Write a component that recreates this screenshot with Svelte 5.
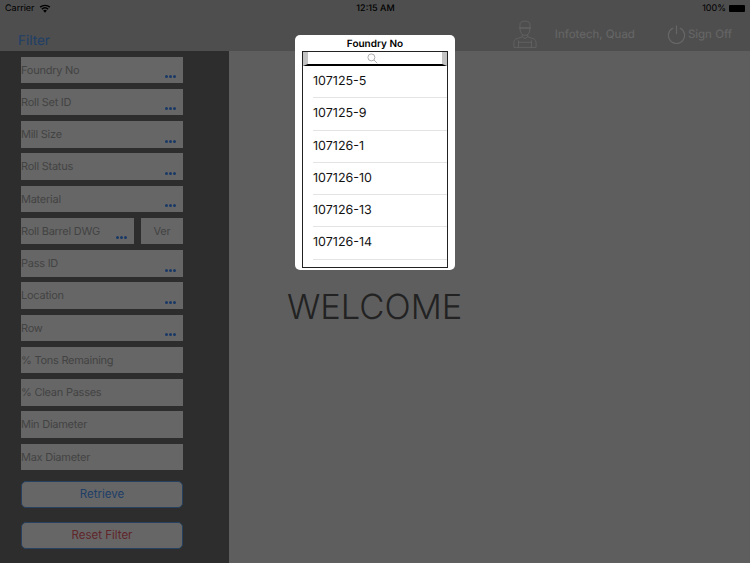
<script>
    const fields = [
        { label: "Foundry No", more: true },
        { label: "Roll Set ID", more: true },
        { label: "Mill Size", more: true },
        { label: "Roll Status", more: true },
        { label: "Material", more: true },
        { label: "Roll Barrel DWG", more: true, ver: true },
        { label: "Pass ID", more: true },
        { label: "Location", more: true },
        { label: "Row", more: true },
        { label: "% Tons Remaining" },
        { label: "% Clean Passes" },
        { label: "Min Diameter" },
        { label: "Max Diameter" },
    ];
    const foundries = ["107125-5", "107125-9", "107126-1", "107126-10", "107126-13", "107126-14"];
</script>

<div class="page">
    <header class="topbar">
        <div class="status">
            <span class="carrier">
                Carrier
                <svg class="wifi" viewBox="0 0 14 10" width="12" height="9" aria-hidden="true">
                    <path d="M7 10 4.800 7.400a3.300 3.300 0 0 1 4.400 0Z" />
                    <path d="M3.900 6.400 2.800 5.100a6.400 6.400 0 0 1 8.400 0L10.100 6.400a4.700 4.700 0 0 0-6.200 0Z" />
                    <path d="M1.900 4.100 .8 2.800a9.500 9.500 0 0 1 12.400 0L12.100 4.100a7.800 7.800 0 0 0-10.200 0Z" />
                </svg>
            </span>
            <span class="clock">12:15 AM</span>
            <span class="battery-wrap">
                100%
                <span class="battery"></span>
            </span>
        </div>
        <div class="nav">
            <span class="filter-title">Filter</span>
            <div class="user">
                <svg class="avatar" viewBox="0 0 26 30" width="24" height="28" fill="none" stroke="currentColor" stroke-width="0.800" aria-hidden="true">
                    <path d="M7.500 8.500V5.500Q7.500 1 13 1T18.500 5.500V8.500Z" />
                    <path d="M6.500 8.500H19.500" />
                    <path d="M7.500 8.500Q7.800 16.500 13 16.500T18.500 8.500" />
                    <path d="M10 15.500V18L13 20 16 18V15.500" />
                    <path d="M10 18 3 20.500Q1 21.500 1 24V29.500H25V24Q25 21.500 23 20.500L16 18" />
                    <path d="M6 22V29.500M20 22V29.500M6 24H20" />
                </svg>
                <span class="user-name">Infotech, Quad</span>
                <svg class="power" viewBox="0 0 20 20" width="19" height="19" fill="none" stroke="currentColor" stroke-width="1.300" stroke-linecap="round" aria-hidden="true">
                    <path d="M6 3.500a8.500 8.500 0 1 0 8 0" />
                    <path d="M10 1V9" />
                </svg>
                <span class="sign-off">Sign Off</span>
            </div>
        </div>
    </header>

    <div class="body">
        <aside class="sidebar">
            {#each fields as f}
                <div class="field-row">
                    <div class="field">
                        <span>{f.label}</span>
                        {#if f.more}
                            <i class="dots"><b></b><b></b><b></b></i>
                        {/if}
                    </div>
                    {#if f.ver}
                        <div class="field ver">Ver</div>
                    {/if}
                </div>
            {/each}
            <button type="button" class="btn retrieve">Retrieve</button>
            <button type="button" class="btn reset">Reset Filter</button>
        </aside>
        <main class="content">
            <h1>WELCOME</h1>
        </main>
    </div>

    <div class="backdrop"></div>

    <div class="popup" role="dialog" aria-label="Foundry No">
        <div class="popup-title">Foundry No</div>
        <div class="table">
            <div class="searchbar">
                <svg viewBox="0 0 12 12" width="11" height="11" fill="none" stroke="#a8a8a8" stroke-width="1" aria-hidden="true">
                    <circle cx="4.800" cy="4.800" r="3.800" />
                    <path d="M7.600 7.600 11.200 11.200" />
                </svg>
            </div>
            <ul>
                {#each foundries as item}
                    <li><span>{item}</span></li>
                {/each}
            </ul>
        </div>
    </div>
</div>

<style>
    :global(body) {
        margin: 0;
    }

    .page {
        position: relative;
        width: 750px;
        height: 563px;
        overflow: hidden;
        background: #ebebeb;
        font-family: Inter, Roboto, "Liberation Sans", sans-serif;
        text-rendering: geometricPrecision;
    }

    .topbar {
        height: 51px;
        background: #c2c2c2;
    }

    .status {
        height: 17px;
        padding: 0 4px 0 5px;
        display: grid;
        grid-template-columns: 1fr auto 1fr;
        align-items: center;
        font-size: 9px;
        color: #000;
    }

    .carrier {
        display: flex;
        align-items: center;
        gap: 4px;
    }

    .wifi {
        fill: #000;
    }

    .clock {
        font-weight: 500;
    }

    .battery-wrap {
        display: flex;
        align-items: center;
        justify-content: flex-end;
        gap: 3px;
    }

    .battery {
        width: 16px;
        height: 7px;
        background: #000;
        border-radius: 1px;
        margin-right: 1px;
    }

    .nav {
        height: 34px;
        display: flex;
        align-items: flex-end;
        justify-content: space-between;
        padding: 0 18px;
    }

    .filter-title {
        font-size: 13.500px;
        line-height: 16px;
        margin-bottom: 2px;
        color: #4f9dff;
    }

    .user {
        display: flex;
        align-items: center;
        color: #fff;
        font-size: 11.500px;
        height: 34px;
        margin-top: -2px;
    }

    .avatar {
        margin-right: 18px;
    }

    .user-name {
        margin-right: 32px;
    }

    .power {
        margin-right: 2px;
    }

    .body {
        display: flex;
        height: 512px;
    }

    .sidebar {
        width: 229px;
        box-sizing: border-box;
        background: #707070;
        padding: 5.500px 46px 0 21px;
        display: flex;
        flex-direction: column;
        gap: 5.750px;
    }

    .field-row {
        display: flex;
        gap: 7px;
    }

    .field {
        position: relative;
        flex: 1;
        height: 26.500px;
        background: #fff;
        color: #a8a8a8;
        font-size: 11px;
        letter-spacing: -0.250px;
        line-height: 26.500px;
    }

    .field.ver {
        flex: 0 0 42px;
        text-align: center;
    }

    .dots {
        position: absolute;
        right: 7px;
        bottom: 5px;
        display: flex;
        gap: 1px;
    }

    .dots b {
        width: 3px;
        height: 3px;
        border-radius: 50%;
        background: #3f8cff;
    }

    .btn {
        width: 162px;
        height: 27px;
        margin: 0;
        padding: 0;
        border: 1px solid #5fa4f0;
        border-radius: 5px;
        background: #fff;
        font: inherit;
        font-size: 11.500px;
    }

    .retrieve {
        margin-top: 5px;
        color: #4f9dff;
    }

    .reset {
        margin-top: 8px;
        color: #f0606c;
    }

    .content {
        flex: 1;
        padding: 237px 0 0 58px;
    }

    h1 {
        margin: 0;
        font-size: 34.500px;
        line-height: 40px;
        font-weight: 300;
        color: #555;
    }

    .backdrop {
        position: absolute;
        inset: 0;
        background: rgb(0 0 0 / 60%);
    }

    .popup {
        position: absolute;
        left: 295px;
        top: 35px;
        width: 160px;
        height: 235px;
        box-sizing: border-box;
        padding: 0 7px;
        background: #fff;
        border-radius: 5px;
    }

    .popup-title {
        height: 16px;
        line-height: 18px;
        text-align: center;
        font-size: 10px;
        font-weight: 600;
        color: #000;
    }

    .table {
        height: 217px;
        box-sizing: border-box;
        border: 1px solid #222;
        overflow: hidden;
    }

    .searchbar {
        height: 14px;
        box-sizing: border-box;
        padding-right: 5px;
        border-bottom: 2px solid #000;
        border-left: 5px solid #c4c4c4;
        border-right: 5px solid #c4c4c4;
        display: flex;
        align-items: center;
        justify-content: center;
    }

    ul {
        list-style: none;
        margin: 0;
        padding: 0;
    }

    li {
        height: 32.250px;
        box-sizing: border-box;
        margin-left: 10px;
        border-bottom: 1px solid #e4e4e4;
        line-height: 32px;
        font-size: 12.500px;
        color: #111;
    }
</style>
